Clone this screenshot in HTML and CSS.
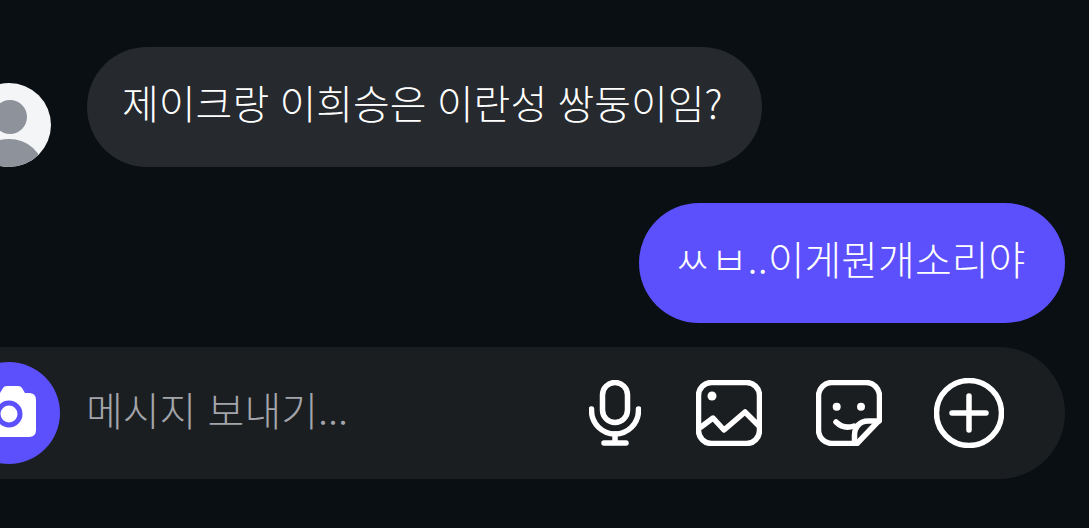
FILE: index.html
```html
<!DOCTYPE html>
<html lang="ko">
<head>
  <meta charset="UTF-8" />
  <meta name="viewport" content="width=device-width, initial-scale=1.0" />
  <title>Messages</title>
  <link rel="stylesheet" href="styles.css">
</head>
<body>
  <div class="chat">
    <div class="msg-row">
      <svg class="avatar" viewBox="0 0 84 84">
        <circle cx="42" cy="42" r="42" fill="#f4f5f7"/>
        <circle cx="43" cy="34" r="17" fill="#8e929b"/>
        <clipPath id="avatar-clip"><circle cx="42" cy="42" r="42"/></clipPath>
        <ellipse cx="42" cy="87" rx="34" ry="31" fill="#8e929b" clip-path="url(#avatar-clip)"/>
      </svg>
      <div class="bubble bubble-in"><span class="bubble-text">제이크랑 이희승은 이란성 쌍둥이임?</span></div>
    </div>

    <div class="bubble bubble-out"><span class="bubble-text">ㅆㅂ..이게뭔개소리야</span></div>

    <div class="composer">
      <div class="camera-btn">
        <svg class="camera-icon" width="56" height="54" viewBox="0 0 56 54">
          <path d="M19 8 L22 3 Q23 1 26 1 H37 Q40 1 41 3 L44 8 H48 Q55 8 55 15 V45 Q55 52 48 52 H8 Q1 52 1 45 V15 Q1 8 8 8 Z" fill="#fff"/>
          <circle cx="28" cy="29" r="11" fill="#fff" stroke="#5b50fb" stroke-width="5"/>
        </svg>
      </div>
      <div class="placeholder">메시지 보내기...</div>
      <div class="tools">
        <svg class="icon icon-mic" viewBox="0 0 52 66">
          <rect x="13.5" y="2.5" width="25" height="40" rx="12.5"/>
          <path d="M2.5 29v1.5a23.5 23.5 0 0 0 47 0V29"/>
          <path d="M26 54v9M15 63h22"/>
        </svg>
        <svg class="icon icon-image" viewBox="0 0 66 66">
          <rect x="2.5" y="2.5" width="61" height="61" rx="13"/>
          <circle class="dot" cx="16" cy="16" r="4.5"/>
          <path d="M5 47l12-9 11 12 21-18 13 13"/>
        </svg>
        <svg class="icon icon-sticker" viewBox="0 0 66 66">
          <path d="M41 63.5H16A13.5 13.5 0 0 1 2.500 50V16A13.500 13.500 0 0 1 16 2.500H50A13.500 13.500 0 0 1 63.500 16V40Z"/>
          <circle class="dot" cx="20.700" cy="26.700" r="4"/>
          <circle class="dot" cx="45" cy="26.700" r="4"/>
          <path d="M20 42C25 47 32 48 38 46"/>
          <path d="M63 41H52C44 41 38.500 47 38.500 55V63"/>
        </svg>
        <svg class="icon icon-plus" viewBox="0 0 70 70">
          <circle cx="35" cy="35" r="32.500"/>
          <path d="M18 35h34M35 18v34"/>
        </svg>
      </div>
    </div>
  </div>
</body>
</html>
```

FILE: styles.css
```css
* { box-sizing: border-box; margin: 0; padding: 0; }
body {
  font-family: "Noto Sans CJK KR", "Noto Sans", sans-serif;
  font-weight: 300;
  background: #0a0f13;
  height: 100vh;
  overflow: hidden;
}
.chat {
  display: flex;
  flex-direction: column;
  padding: 47px 24px 0 0;
}

.msg-row {
  display: flex;
  align-items: flex-end;
  gap: 36px;
  margin-left: -33px;
}
.avatar { width: 84px; height: 84px; flex-shrink: 0; }

.bubble {
  height: 120px;
  border-radius: 60px;
  display: flex;
  align-items: center;
  color: #fff;
  font-size: 40px;
  white-space: nowrap;
}
.bubble-text { margin-top: -10px; }
.bubble-in {
  width: 675px;
  padding-left: 35px;
  background: #26292e;
  word-spacing: -1px;
}
.bubble-out {
  align-self: flex-end;
  width: 426px;
  margin-top: 36px;
  padding-left: 35px;
  background: #5b50fb;
}

.composer {
  display: flex;
  align-items: center;
  height: 132px;
  margin: 24px 0 0 -60px;
  padding-left: 18px;
  border-radius: 66px;
  background: #1b1e21;
}
.camera-btn {
  width: 102px;
  height: 102px;
  border-radius: 50%;
  background: #5b50fb;
  display: flex;
  align-items: center;
  justify-content: center;
  flex-shrink: 0;
}
.camera-icon { margin-top: -3px; }
.placeholder {
  margin-left: 26px;
  margin-top: -8px;
  color: #a3a5ab;
  font-size: 40px;
}

.tools {
  display: flex;
  align-items: center;
  margin-left: auto;
  margin-right: 61px;
}
.icon {
  fill: none;
  stroke: #fff;
  stroke-width: 5.5;
  stroke-linecap: round;
  stroke-linejoin: round;
  flex-shrink: 0;
}
.icon .dot { fill: #fff; stroke: none; }
.icon-mic { width: 52px; height: 66px; }
.icon-image { width: 66px; height: 66px; margin-left: 55px; }
.icon-sticker { width: 66px; height: 66px; margin-left: 54px; }
.icon-plus { width: 70px; height: 70px; margin-left: 52px; }
```
